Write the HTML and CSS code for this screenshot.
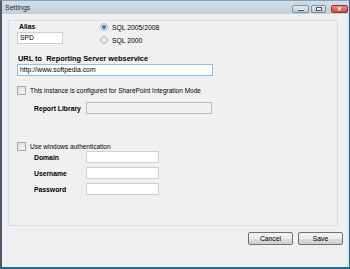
FILE: index.html
```html
<!DOCTYPE html>
<html lang="en">
<head>
    <meta charset="UTF-8">
    <title>Settings</title>
    <link rel="stylesheet" href="styles.css">
</head>
<body>
    <div class="window">
        <div class="titlebar">
            <span class="title">Settings</span>
            <div class="controls">
                <span class="ctl min"><i></i></span>
                <span class="ctl max"><i></i></span>
                <span class="ctl close">&#x2715;</span>
            </div>
        </div>

        <div class="content">
            <div class="panel">
                <div class="top-row">
                    <div class="alias-col">
                        <div class="label bold alias-label">Alias</div>
                        <div class="input alias-input">SPD</div>
                    </div>
                    <div class="radio-col">
                        <div class="radio-line"><span class="radio checked"></span>SQL 2005/2008</div>
                        <div class="radio-line second"><span class="radio"></span>SQL 2000</div>
                    </div>
                </div>

                <div class="label url-label">URL to&nbsp; Reporting Server webservice</div>
                <div class="input url-input">http://www.softpedia.com</div>

                <div class="check-line first-check"><span class="check"></span>This instance is configured for SharePoint Integration Mode</div>

                <div class="field-row library-row">
                    <span class="field-label">Report Library</span>
                    <span class="input disabled lib-input"></span>
                </div>

                <div class="check-line auth-check"><span class="check"></span>Use windows authentication</div>

                <div class="field-row auth-row">
                    <span class="field-label">Domain</span>
                    <span class="input auth-input"></span>
                </div>
                <div class="field-row auth-row spaced">
                    <span class="field-label">Username</span>
                    <span class="input auth-input"></span>
                </div>
                <div class="field-row auth-row spaced">
                    <span class="field-label">Password</span>
                    <span class="input auth-input"></span>
                </div>
            </div>

            <div class="buttons">
                <button class="btn">Cancel</button>
                <button class="btn">Save</button>
            </div>
        </div>
    </div>
</body>
</html>
```

FILE: styles.css
```css
* {
    box-sizing: border-box;
}
body {
    margin: 0;
    font-family: "Liberation Sans", Arial, sans-serif;
    font-size: 6.5px;
    color: #000;
    background: #f0f0f0;
}
.window {
    width: 350px;
    height: 269px;
    background: #f0f0f0;
    border-left: 2px solid #4d5966;
    border-right: 1px solid #1f6a8e;
    border-bottom: 2px solid #1d6f86;
    border-top: 1px solid #8aa0b6;
    box-shadow: inset -2px 0 0 #dce4ec;
    overflow: hidden;
}
.titlebar {
    height: 13px;
    display: flex;
    align-items: center;
    justify-content: space-between;
    padding-left: 3px;
    background: linear-gradient(#d3dde8, #c2cfdd);
}
.title {
    color: #1e2a36;
    font-size: 7px;
}
.controls {
    display: flex;
    align-items: center;
    gap: 2px;
    margin-right: 1px;
    margin-top: 2px;
}
.ctl {
    height: 8px;
    border: 1px solid #7c8fa6;
    border-radius: 2px;
    background: linear-gradient(#e3ebf4, #b8c8da);
    display: flex;
    align-items: center;
    justify-content: center;
}
.min {
    width: 17px;
}
.min i {
    width: 6px;
    height: 2px;
    margin-top: 2px;
    background: #fff;
    border: 1px solid #45566a;
    border-width: 0 0 1px 0;
}
.max {
    width: 15px;
    margin-right: 3px;
}
.max i {
    width: 6px;
    height: 4px;
    border: 1px solid #45566a;
    background: #fff;
}
.close {
    width: 17px;
    border-color: #8a3a32;
    background: linear-gradient(#e88f80, #cf4a3a);
    color: #fff;
    font-size: 6px;
    font-weight: bold;
    line-height: 1;
}
.content {
    padding: 6px 2px 0 6px;
}
.panel {
    width: 330px;
    height: 206px;
    border: 1px solid #d6dfe6;
    padding: 1px 0 0 8px;
}
.label {
    height: 10px;
    line-height: 10px;
}
.bold,
.url-label,
.field-label {
    font-weight: bold;
    font-size: 6.8px;
}
.top-row {
    display: flex;
}
.alias-col {
    width: 46px;
}
.alias-label {
    padding-left: 2px;
}
.input {
    display: block;
    height: 12px;
    line-height: 10px;
    padding-left: 2px;
    background: #fff;
    border: 1px solid #c9d0d6;
    font-size: 6.8px;
}
.alias-input {
    width: 46px;
}
.radio-col {
    margin-left: 37px;
    font-size: 6.8px;
}
.radio-line {
    display: flex;
    align-items: center;
    height: 10px;
}
.radio-line.second {
    margin-top: 3px;
}
.radio {
    width: 8px;
    height: 8px;
    border-radius: 50%;
    border: 1px solid #b0b6bc;
    background: radial-gradient(#f4f4f4, #d8d8d8);
    margin-right: 4px;
}
.radio.checked {
    background: radial-gradient(circle, #2a7ec8 0, #3d8ad0 1.6px, #e8eef2 2.4px, #d4dadf 100%);
}
.url-label {
    margin-top: 9px;
    padding-left: 1px;
    font-size: 7.4px;
}
.url-input {
    width: 196px;
    border-color: #8ec0e8;
}
.check-line {
    display: flex;
    align-items: center;
    height: 10px;
}
.first-check {
    margin-top: 9px;
}
.check {
    width: 9px;
    height: 9px;
    border: 1px solid #a4a9ae;
    background: linear-gradient(135deg, #dcdcdc, #f6f6f6);
    margin-right: 4px;
}
.field-row {
    display: flex;
    align-items: center;
}
.field-label {
    width: 69px;
    padding-left: 17px;
}
.library-row {
    margin-top: 7px;
}
.lib-input {
    width: 126px;
    height: 12px;
}
.disabled {
    background: #f0f0f0;
    border-color: #b8bcc0;
}
.auth-check {
    margin-top: 27px;
}
.auth-input {
    width: 73px;
}
.spaced {
    margin-top: 4px;
}
.buttons {
    display: flex;
    justify-content: flex-end;
    gap: 5px;
    margin-top: 6px;
    padding-right: 4px;
}
.btn {
    width: 45px;
    height: 13px;
    padding: 0;
    font-family: "Liberation Sans", Arial, sans-serif;
    font-size: 6.8px;
    color: #000;
    border: 1px solid #707070;
    border-radius: 2px;
    background: linear-gradient(#f2f2f2 0, #ebebeb 50%, #dddddd 51%, #cfcfcf 100%);
}
```
